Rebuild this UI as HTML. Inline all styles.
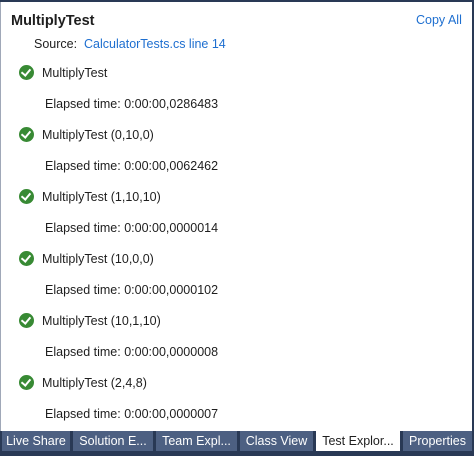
<!DOCTYPE html><html><head><style>
body{margin:0;width:474px;height:456px;background:#293955;font-family:"Liberation Sans",sans-serif;font-size:12.5px;color:#1e1e1e;position:relative;overflow:hidden}
.p{position:absolute;left:0;top:2px;width:472px;height:429px;background:#fff;border-left:1px solid #a0a8b8;box-sizing:border-box}
.t{position:absolute;white-space:nowrap}
.ic{position:absolute;left:19px;width:15px;height:15px;border-radius:50%;background:#388a34}
.ic:after{content:"";position:absolute;left:4px;top:2px;width:4px;height:7px;border:solid #fff;border-width:0 2px 2px 0;transform:rotate(40deg)}
.tab{position:absolute;top:431px;height:20px;background:#4d6082;color:#fff;line-height:20px;text-align:center;font-size:12.5px}
</style></head><body>
<div class="p"></div>
<div class="t" style="left:11px;top:13px;font-weight:bold;font-size:14.5px">MultiplyTest</div>
<div class="t" style="left:416px;top:13px;color:#1e6fd0">Copy All</div>
<div class="t" style="left:34px;top:37px">Source:&nbsp; <span style="color:#1e6fd0">CalculatorTests.cs line 14</span></div>
<div class="ic" style="top:65px"></div><div class="t" style="left:42px;top:66px">MultiplyTest</div>
<div class="t" style="left:45px;top:97px">Elapsed time: 0:00:00,0286483</div>
<div class="ic" style="top:127px"></div><div class="t" style="left:42px;top:128px">MultiplyTest (0,10,0)</div>
<div class="t" style="left:45px;top:159px">Elapsed time: 0:00:00,0062462</div>
<div class="ic" style="top:189px"></div><div class="t" style="left:42px;top:190px">MultiplyTest (1,10,10)</div>
<div class="t" style="left:45px;top:221px">Elapsed time: 0:00:00,0000014</div>
<div class="ic" style="top:251px"></div><div class="t" style="left:42px;top:252px">MultiplyTest (10,0,0)</div>
<div class="t" style="left:45px;top:283px">Elapsed time: 0:00:00,0000102</div>
<div class="ic" style="top:313px"></div><div class="t" style="left:42px;top:314px">MultiplyTest (10,1,10)</div>
<div class="t" style="left:45px;top:345px">Elapsed time: 0:00:00,0000008</div>
<div class="ic" style="top:375px"></div><div class="t" style="left:42px;top:376px">MultiplyTest (2,4,8)</div>
<div class="t" style="left:45px;top:407px">Elapsed time: 0:00:00,0000007</div>
<div class="tab" style="left:2px;width:68px">Live Share</div>
<div class="tab" style="left:73px;width:80px">Solution E...</div>
<div class="tab" style="left:156px;width:81px">Team Expl...</div>
<div class="tab" style="left:240px;width:73px">Class View</div>
<div class="tab" style="left:316px;width:84px;background:#fff;color:#1e1e1e">Test Explor...</div>
<div class="tab" style="left:403px;width:69px">Properties</div>
</body></html>
